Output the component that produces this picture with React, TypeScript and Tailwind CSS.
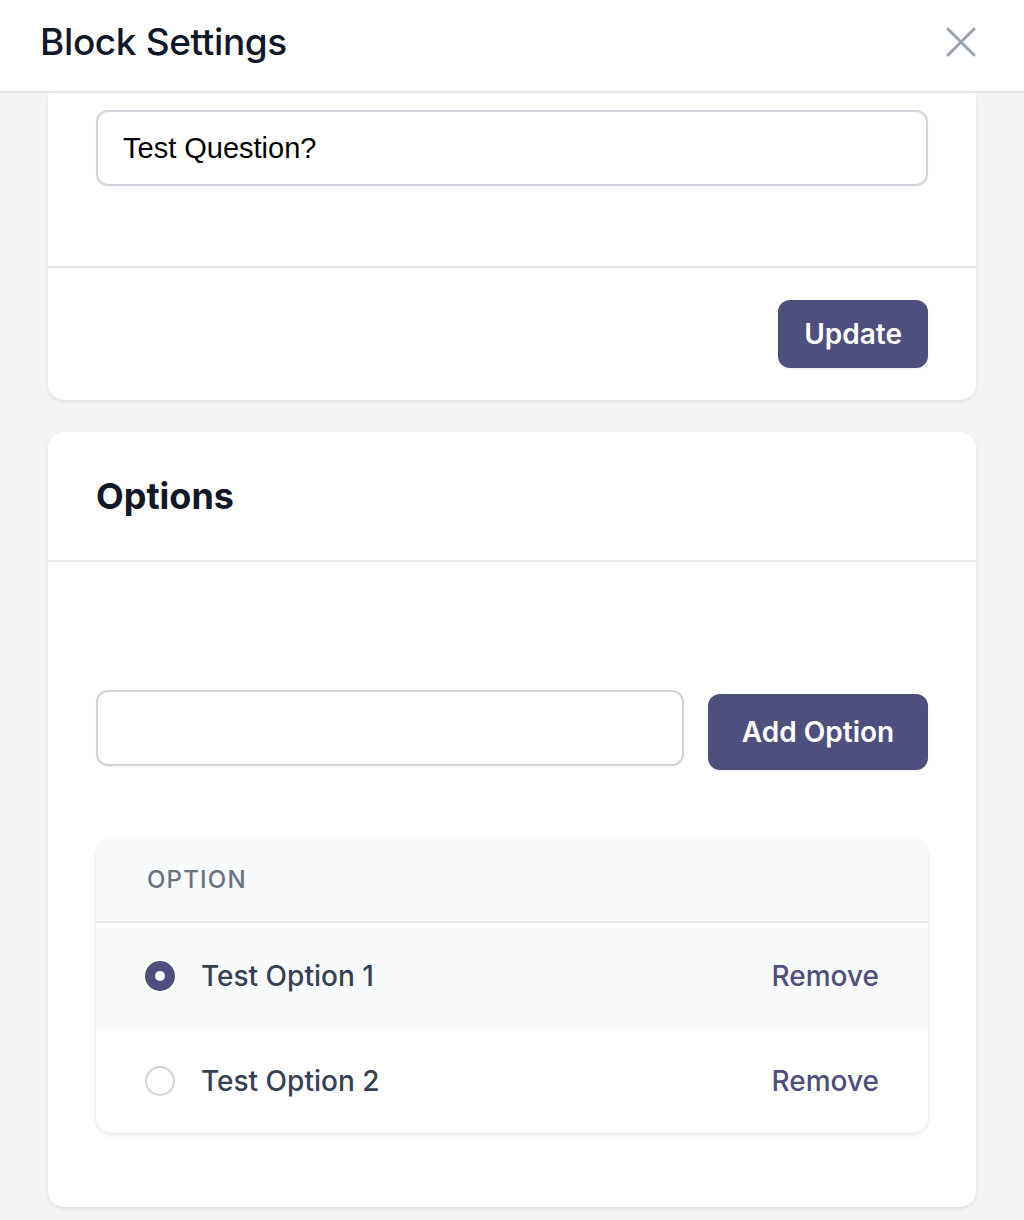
import { useState } from "react";

interface Option {
    id: number;
    label: string;
}

export default function App() {
    const [question, setQuestion] = useState("Test Question?");
    const [newOption, setNewOption] = useState("");
    const [selected, setSelected] = useState(1);
    const [options, setOptions] = useState<Option[]>([
        { id: 1, label: "Test Option 1" },
        { id: 2, label: "Test Option 2" },
    ]);

    const addOption = () => {
        if (!newOption.trim()) return;
        setOptions(prev => [...prev, { id: Date.now(), label: newOption }]);
        setNewOption("");
    };

    const removeOption = (id: number) => {
        setOptions(prev => prev.filter(o => o.id !== id));
    };

    return (
        <div className="min-h-screen bg-[#f3f4f6] font-['Inter',sans-serif] text-[#111827]">
            {/* Header */}
            <div className="h-[93px] bg-white border-b-2 border-[#e5e7eb] flex items-center justify-between pl-[40px] pr-[48px] pb-[8px]">
                <h1 className="text-[37px] font-medium tracking-[-0.01em] text-[#111827]">Block Settings</h1>
                <button className="text-[#9ca3af] w-[30px] h-[30px] flex items-center justify-center">
                    <svg width="30" height="30" viewBox="0 0 30 30" fill="none" stroke="currentColor" strokeWidth="3" strokeLinecap="round">
                        <line x1="2" y1="2" x2="28" y2="28" />
                        <line x1="28" y1="2" x2="2" y2="28" />
                    </svg>
                </button>
            </div>

            <div className="px-[48px] pb-[14px] flex flex-col gap-[32px]">
                {/* Question card */}
                <div className="bg-white rounded-b-[16px] shadow-[0_2px_4px_rgba(0,0,0,0.08)]">
                    <div className="px-[48px] pt-[17px] pb-[80px] border-b-2 border-[#e5e7eb]">
                        <input
                            value={question}
                            onChange={(e) => setQuestion(e.target.value)}
                            className="w-full h-[76px] border-2 border-[#d1d5db] rounded-[12px] px-[25px] text-[29px] font-['Liberation_Sans',sans-serif] text-black outline-none shadow-[0_1px_2px_rgba(0,0,0,0.05)]"
                        />
                    </div>
                    <div className="px-[48px] py-[32px] flex justify-end">
                        <button className="h-[68px] px-[26px] rounded-[12px] bg-[#4f4f7d] text-white text-[28px] font-semibold shadow-[0_1px_2px_rgba(0,0,0,0.08)]">
                            Update
                        </button>
                    </div>
                </div>

                {/* Options card */}
                <div className="bg-white rounded-[16px] shadow-[0_2px_4px_rgba(0,0,0,0.08)]">
                    <div className="h-[130px] px-[48px] flex items-center border-b-2 border-[#e5e7eb]">
                        <h2 className="text-[36px] font-bold text-[#111827]">Options</h2>
                    </div>
                    <div className="px-[48px] pt-[128px] pb-[74px]">
                        <div className="flex items-start gap-[24px]">
                            <input
                                value={newOption}
                                onChange={(e) => setNewOption(e.target.value)}
                                className="flex-1 h-[76px] border-2 border-[#d1d5db] rounded-[12px] px-[25px] text-[29px] font-['Liberation_Sans',sans-serif] outline-none shadow-[0_1px_2px_rgba(0,0,0,0.05)]"
                            />
                            <button
                                onClick={addOption}
                                className="mt-[4px] h-[76px] w-[220px] rounded-[12px] bg-[#4f4f7d] text-white text-[28px] font-semibold shadow-[0_1px_2px_rgba(0,0,0,0.08)]"
                            >
                                Add Option
                            </button>
                        </div>

                        {/* Options table */}
                        <div className="mt-[68px] rounded-[16px] overflow-hidden bg-white shadow-[0_2px_4px_rgba(0,0,0,0.1),0_0_2px_rgba(0,0,0,0.04)]">
                            <div className="h-[85px] bg-[#f9fafb] border-b-2 border-[#e5e7eb] flex items-center px-[51px]">
                                <span className="text-[24px] font-medium tracking-[0.05em] text-[#6b7280]">OPTION</span>
                            </div>
                            {options.map(option => (
                                <div
                                    key={option.id}
                                    className={`h-[105px] flex items-center justify-between pl-[49px] pr-[49px] ${selected === option.id ? "bg-[#f9fafb]" : "bg-white"}`}
                                >
                                    <div className="flex items-center gap-[26px]">
                                        <button
                                            onClick={() => setSelected(option.id)}
                                            className={selected === option.id
                                                ? "w-[30px] h-[30px] rounded-full bg-[#4f4f7d] flex items-center justify-center"
                                                : "w-[30px] h-[30px] rounded-full border-2 border-[#d1d5db] bg-white"}
                                        >
                                            {selected === option.id && <span className="w-[10px] h-[10px] rounded-full bg-white" />}
                                        </button>
                                        <span className="text-[28px] font-medium text-[#374151]">{option.label}</span>
                                    </div>
                                    <button
                                        onClick={() => removeOption(option.id)}
                                        className="text-[28px] font-medium text-[#4f4f7d]"
                                    >
                                        Remove
                                    </button>
                                </div>
                            ))}
                        </div>
                    </div>
                </div>
            </div>
        </div>
    );
}
